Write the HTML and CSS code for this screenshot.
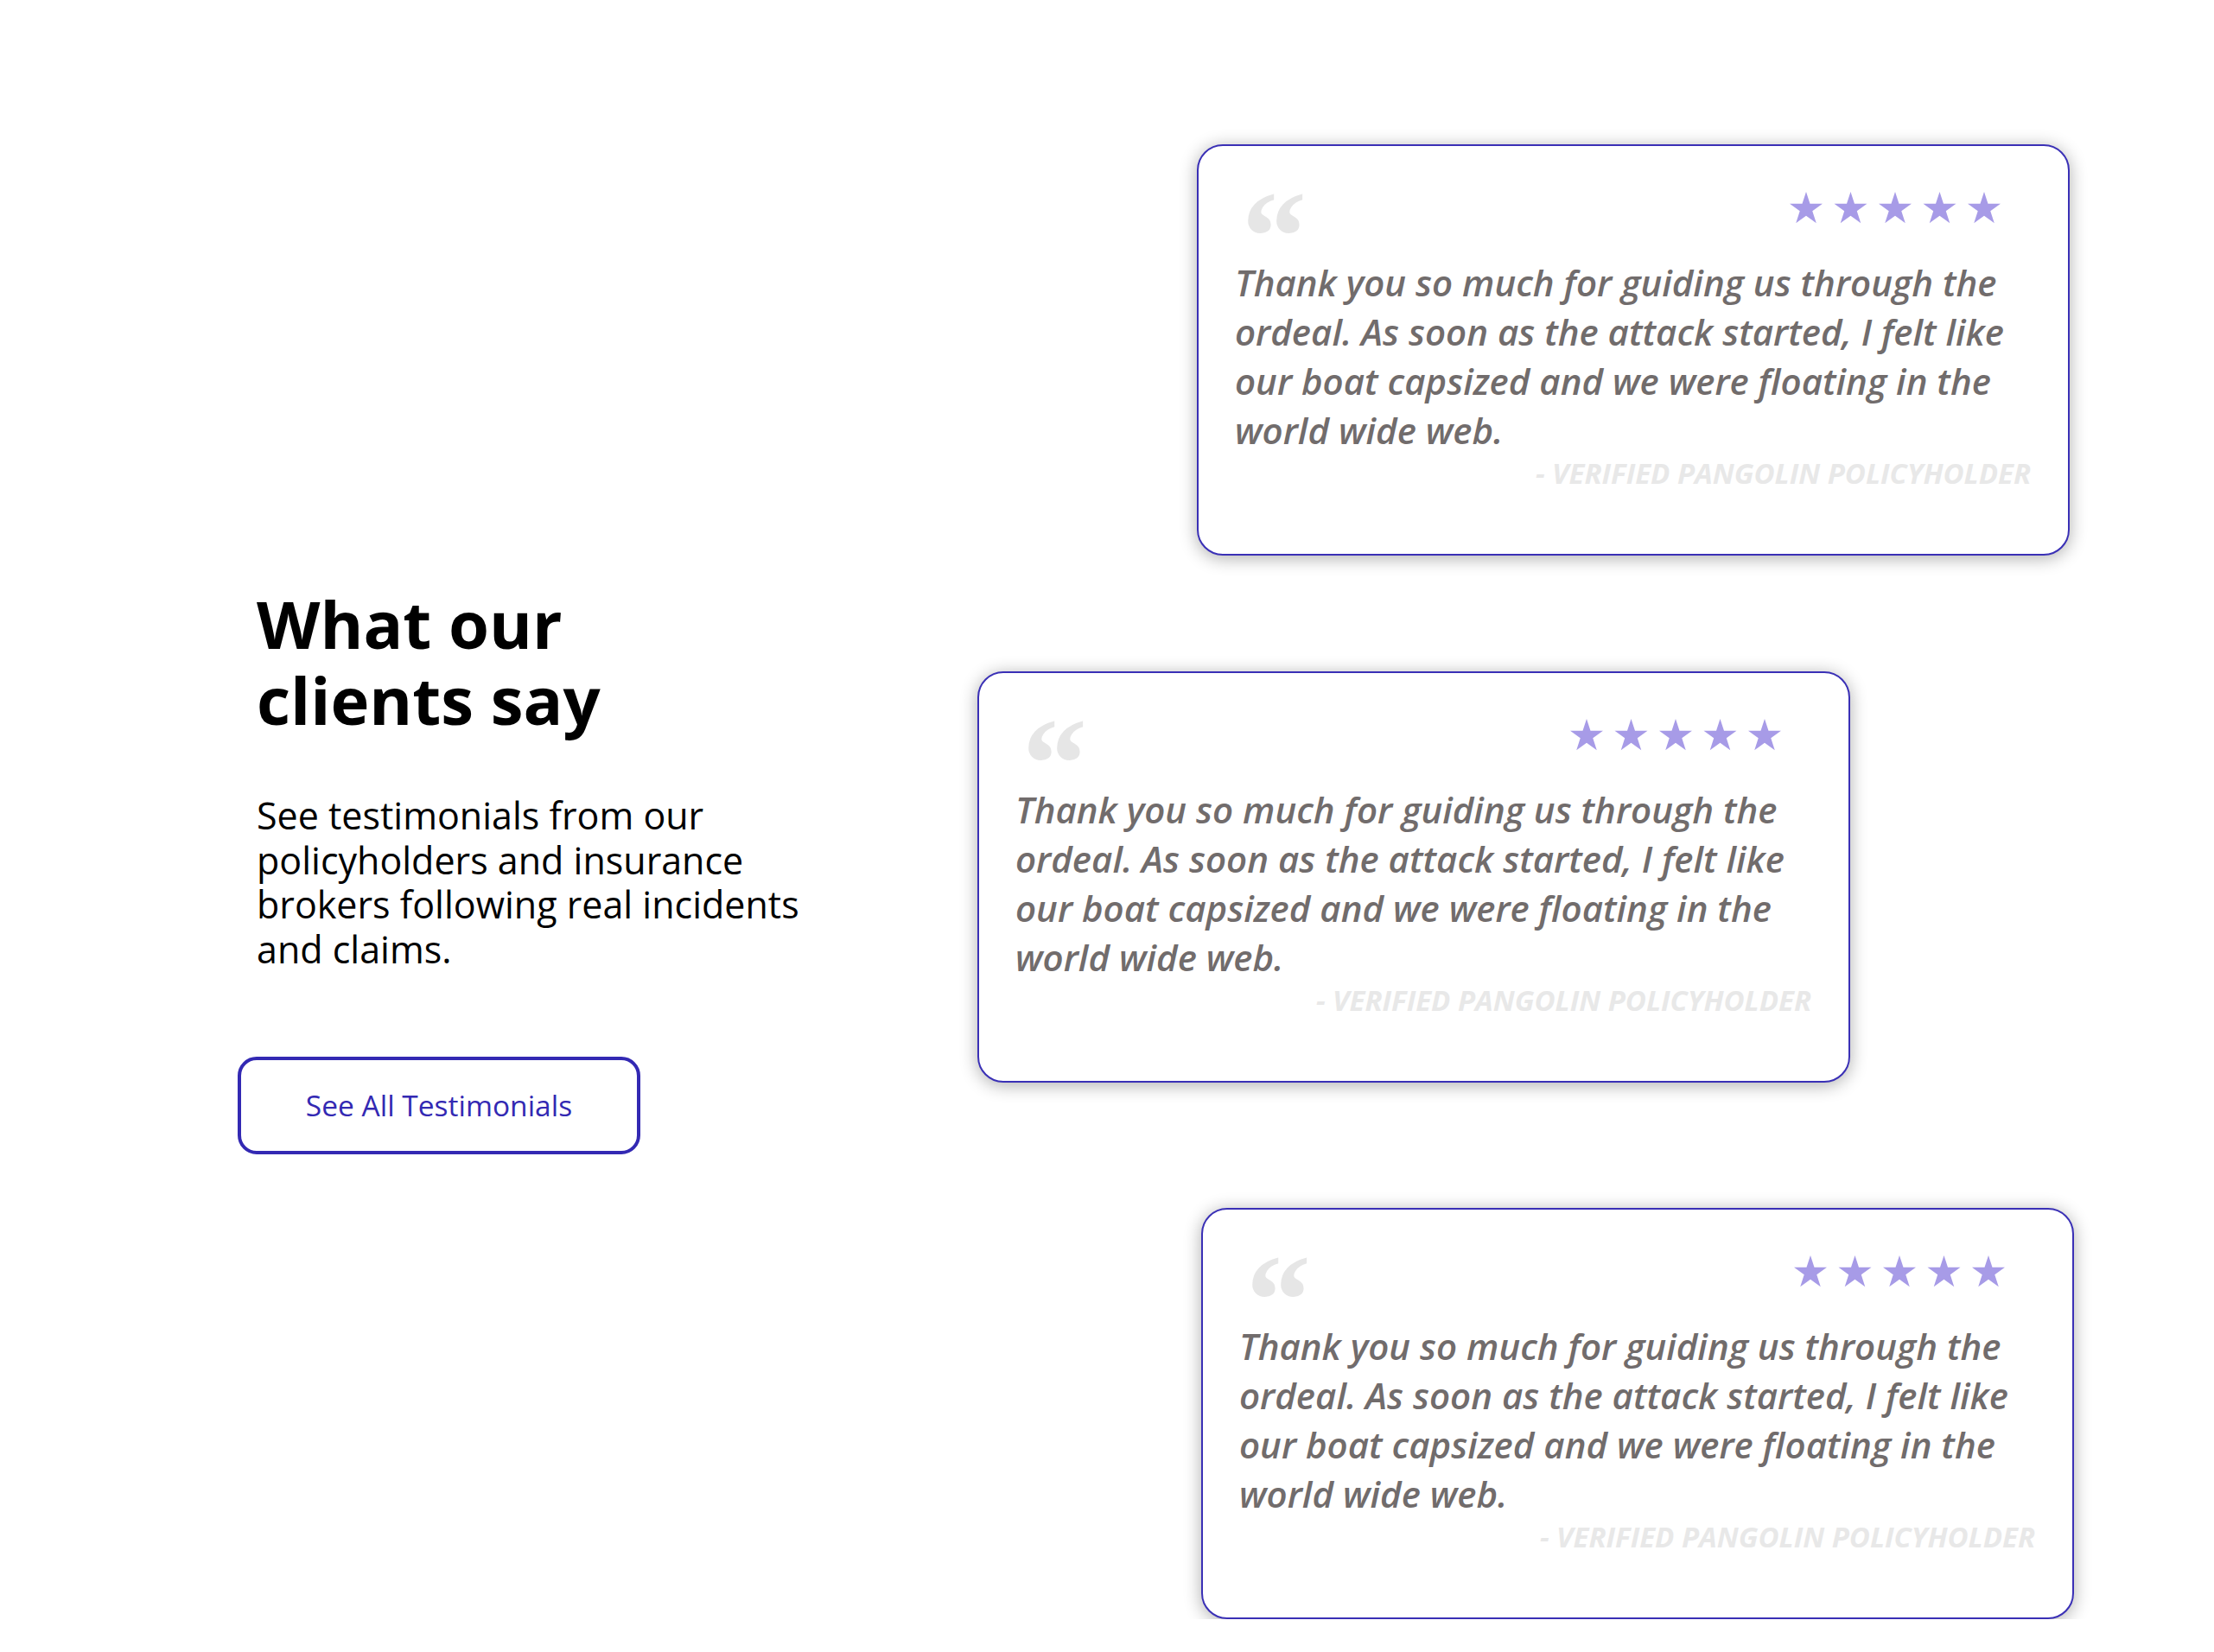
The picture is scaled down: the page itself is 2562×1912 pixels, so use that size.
FILE: index.html
```html
<!DOCTYPE html>
<html lang="en">
<head>
<meta charset="utf-8">
<title>What our clients say</title>
<link rel="stylesheet" href="styles.css">
</head>
<body>
<svg class="defs" width="0" height="0" aria-hidden="true">
  <defs>
    <polygon id="star" points="19,0 23.49,13.82 38,13.82 26.27,22.36 30.76,36.18 19,27.64 7.24,36.18 11.73,22.36 0,13.82 14.51,13.82"/>
  </defs>
</svg>
<main class="section">
  <div class="intro">
    <h1 class="title">What our<br>clients say</h1>
    <p class="lead">See testimonials from our policyholders and insurance brokers following real incidents and claims.</p>
    <a class="btn" href="#">See All Testimonials</a>
  </div>
  <div class="cards">
    <article class="card card-a">
      <div class="card-head">
        <span class="quote">&#8220;</span>
        <svg class="stars" width="244" height="37" viewBox="0 0 244 37"><use href="#star" x="0"/><use href="#star" x="51.5"/><use href="#star" x="103"/><use href="#star" x="154.5"/><use href="#star" x="206"/></svg>
      </div>
      <p class="text">Thank you so much for guiding us through the ordeal. As soon as the attack started, I felt like our boat capsized and we were floating in the world wide web.</p>
      <p class="author">- VERIFIED PANGOLIN POLICYHOLDER</p>
    </article>
    <article class="card card-b">
      <div class="card-head">
        <span class="quote">&#8220;</span>
        <svg class="stars" width="244" height="37" viewBox="0 0 244 37"><use href="#star" x="0"/><use href="#star" x="51.5"/><use href="#star" x="103"/><use href="#star" x="154.5"/><use href="#star" x="206"/></svg>
      </div>
      <p class="text">Thank you so much for guiding us through the ordeal. As soon as the attack started, I felt like our boat capsized and we were floating in the world wide web.</p>
      <p class="author">- VERIFIED PANGOLIN POLICYHOLDER</p>
    </article>
    <article class="card card-c">
      <div class="card-head">
        <span class="quote">&#8220;</span>
        <svg class="stars" width="244" height="37" viewBox="0 0 244 37"><use href="#star" x="0"/><use href="#star" x="51.5"/><use href="#star" x="103"/><use href="#star" x="154.5"/><use href="#star" x="206"/></svg>
      </div>
      <p class="text">Thank you so much for guiding us through the ordeal. As soon as the attack started, I felt like our boat capsized and we were floating in the world wide web.</p>
      <p class="author">- VERIFIED PANGOLIN POLICYHOLDER</p>
    </article>
  </div>
</main>
</body>
</html>
```

FILE: styles.css
```css
* { box-sizing: border-box; }

html, body {
  margin: 0;
  padding: 0;
  background: #ffffff;
}

body {
  font-family: "Open Sans", "Noto Sans", "Liberation Sans", sans-serif;
  color: #000;
}

.defs {
  position: absolute;
  width: 0;
  height: 0;
}

.section {
  display: flex;
  align-items: flex-start;
  padding: 167px 0 0 297px;
}

.intro {
  flex: 0 0 658px;
  margin-top: 511px;
  display: flex;
  flex-direction: column;
  align-items: flex-start;
}

.title {
  margin: 0;
  font-size: 76px;
  line-height: 88px;
  font-weight: 700;
  color: #000;
}

.lead {
  margin: 64px 0 0;
  font-size: 43px;
  line-height: 51.7px;
  font-weight: 400;
  color: #000;
}

.btn {
  margin: 98px 0 0 -22px;
  width: 466px;
  height: 113px;
  border: 4px solid #3329b3;
  border-radius: 22px;
  display: flex;
  align-items: center;
  justify-content: center;
  font-size: 33.5px;
  color: #3329b3;
  text-decoration: none;
}

.cards {
  margin-left: 176px;
  display: flex;
  flex-direction: column;
}

.card {
  width: 1010px;
  border: 2px solid #3a30b6;
  border-radius: 30px;
  background: #fff;
  box-shadow: 0 3px 20px rgba(0, 0, 0, 0.32);
  padding: 52px 43px 73px 42px;
}

.card-a { margin-left: 254px; }
.card-b { margin-top: 134px; }
.card-c { margin-top: 145px; margin-left: 259px; }

.card-head {
  display: flex;
  justify-content: space-between;
  align-items: flex-start;
  height: 50px;
  padding: 0 35px 0 8px;
}

.quote {
  display: block;
  height: 40px;
  margin-top: -22px;
  font-family: "Liberation Serif", "DejaVu Serif", serif;
  font-weight: 700;
  font-size: 150px;
  line-height: 150px;
  color: #e6e6e6;
}

.stars {
  display: block;
  margin-top: 1px;
  fill: #a79be7;
}

.text {
  margin: 27px 0 0;
  font-style: italic;
  font-weight: 600;
  font-size: 42px;
  line-height: 57px;
  color: #716c6c;
}

.author {
  margin: 2px 0 0;
  text-align: right;
  font-style: italic;
  font-weight: 700;
  font-size: 33px;
  line-height: 40px;
  color: #e8e8e8;
}
```
